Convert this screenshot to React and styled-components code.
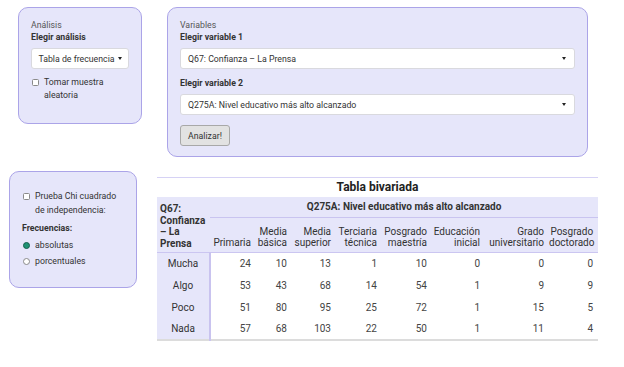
import React from "react";
import styled, { createGlobalStyle } from "styled-components";

const Global = createGlobalStyle`
  html, body { margin: 0; padding: 0; background: #fff; }
  body { font-family: Roboto, "Liberation Sans", sans-serif; color: #333; font-size: 8.75px; }
  * { box-sizing: border-box; }
`;

const Page = styled.div`
  width: 624px;
  padding-top: 7px;
`;

const TopRow = styled.div`
  display: flex;
  align-items: flex-start;
  padding-left: 18px;
  gap: 25px;
`;

const BottomRow = styled.div`
  display: flex;
  align-items: flex-start;
  padding-left: 9px;
  gap: 20px;
  margin-top: 14px;
`;

const Panel = styled.div`
  background: #e6e6fa;
  border: 1px solid #aba4e8;
  border-radius: 10px;
  width: ${(p) => p.$w}px;
  height: ${(p) => p.$h}px;
  padding: ${(p) => p.$pt}px 12px 0 12px;
  font-size: 8.75px;
`;

const Heading = styled.div`
  line-height: 12px;
  color: #555;
`;

const Label = styled.div`
  line-height: 12px;
  font-weight: 700;
  color: #333;
  margin-top: ${(p) => p.$mt || 0}px;
`;

const Select = styled.div`
  margin-top: ${(p) => p.$mt || 5}px;
  height: 21px;
  background: #fff;
  border: 1px solid #d9d9de;
  border-radius: 3px;
  display: flex;
  align-items: center;
  justify-content: ${(p) => (p.$center ? "center" : "space-between")};
  padding: 0 ${(p) => (p.$center ? 2 : 8)}px 0 ${(p) => (p.$center ? 2 : 7)}px;
  color: #333;
  gap: 3px;
  white-space: nowrap;
`;

const Caret = styled.span`
  display: inline-block;
  width: 0;
  height: 0;
  border-left: 2.5px solid transparent;
  border-right: 2.5px solid transparent;
  border-top: 3px solid #222;
`;

const Button = styled.div`
  margin-top: 10px;
  width: 50px;
  height: 21px;
  display: flex;
  align-items: center;
  justify-content: center;
  background: #e2e2e2;
  border: 1px solid #a8a8a8;
  border-radius: 3px;
  color: #333;
`;

const CheckRow = styled.div`
  display: flex;
  align-items: flex-start;
  gap: 5px;
  margin-top: ${(p) => p.$mt || 0}px;
  line-height: ${(p) => p.$lh || 13}px;
  color: #333;
  white-space: nowrap;
`;

const Box = styled.span`
  flex: none;
  width: 7px;
  height: 7px;
  margin-top: ${(p) => p.$off}px;
  margin-left: 1px;
  border: 1px solid #8a8a8a;
  border-radius: 1.5px;
  background: #fff;
`;

const Radio = styled.span`
  flex: none;
  width: 7px;
  height: 7px;
  margin-top: 3.5px;
  margin-left: 1px;
  border-radius: 50%;
  border: 1px solid ${(p) => (p.$on ? "#15604b" : "#8a8a8a")};
  background: ${(p) => (p.$on ? "#1f9274" : "#fff")};
`;

const TableWrap = styled.div`
  margin-top: 6px;
  width: 441px;
  border-top: 1px solid #d6d2f5;
`;

const Title = styled.div`
  height: 19px;
  line-height: 19px;
  text-align: center;
  font-size: 12px;
  font-weight: 700;
  color: #222;
`;

const Table = styled.table`
  width: 441px;
  table-layout: fixed;
  border-collapse: collapse;
  font-size: 10px;
  border-bottom: 2px solid #dcdcdc;
`;

const Col = styled.col`
  width: ${(p) => p.$w}px;
`;

const Thead = styled.thead`
  background: #e6e6fa;
  border-bottom: 1px solid #cbc6f1;
`;

const CornerTh = styled.th`
  text-align: left;
  vertical-align: top;
  font-weight: 700;
  line-height: 11.5px;
  padding: 6px 3px 0 3px;
  color: #333;
`;

const SpanTh = styled.th`
  height: 20px;
  text-align: center;
  font-weight: 700;
  color: #333;
  border-bottom: 1px solid #c9c4f0;
  padding: 0;
`;

const ColTh = styled.th`
  height: 35px;
  text-align: right;
  vertical-align: bottom;
  font-weight: 400;
  line-height: 11.5px;
  padding: 0 5px 3px 0;
  color: #333;
`;

const RowTh = styled.th`
  background: #e6e6fa;
  border-right: 2px solid #c9c3ef;
  font-weight: 400;
  text-align: center;
  height: 22px;
  padding: 0;
  color: #333;
`;

const Td = styled.td`
  text-align: right;
  padding: 0 5px 0 0;
  color: #444;
  height: 22px;
`;

const widths = [53, 46, 36, 44, 46, 50, 53, 64, 49];
const cols = [
  ["Primaria"],
  ["Media", "básica"],
  ["Media", "superior"],
  ["Terciaria", "técnica"],
  ["Posgrado", "maestría"],
  ["Educación", "inicial"],
  ["Grado", "universitario"],
  ["Posgrado", "doctorado"],
];
const rows = [
  ["Mucha", 24, 10, 13, 1, 10, 0, 0, 0],
  ["Algo", 53, 43, 68, 14, 54, 1, 9, 9],
  ["Poco", 51, 80, 95, 25, 72, 1, 15, 5],
  ["Nada", 57, 68, 103, 22, 50, 1, 11, 4],
];

export default function App() {
  return (
    <Page>
      <Global />
      <TopRow>
        <Panel $w={124} $h={117} $pt={11}>
          <Heading>Análisis</Heading>
          <Label>Elegir análisis</Label>
          <Select $center>
            <span>Tabla de frecuencia</span>
            <Caret />
          </Select>
          <CheckRow $mt={7}>
            <Box $off={3} />
            <span>
              Tomar muestra
              <br />
              aleatoria
            </span>
          </CheckRow>
        </Panel>
        <Panel $w={421} $h={150} $pt={11}>
          <Heading>Variables</Heading>
          <Label>Elegir variable 1</Label>
          <Select>
            <span>Q67: Confianza – La Prensa</span>
            <Caret />
          </Select>
          <Label $mt={8}>Elegir variable 2</Label>
          <Select>
            <span>Q275A: Nivel educativo más alto alcanzado</span>
            <Caret />
          </Select>
          <Button>Analizar!</Button>
        </Panel>
      </TopRow>
      <BottomRow>
        <Panel $w={128} $h={117} $pt={17}>
          <CheckRow $lh={14}>
            <Box $off={3.5} />
            <span>
              Prueba Chi cuadrado
              <br />
              de independencia:
            </span>
          </CheckRow>
          <Label $mt={5}>Frecuencias:</Label>
          <CheckRow $lh={14} $mt={4}>
            <Radio $on />
            <span>absolutas</span>
          </CheckRow>
          <CheckRow $lh={14} $mt={2}>
            <Radio />
            <span>porcentuales</span>
          </CheckRow>
        </Panel>
        <TableWrap>
          <Title>Tabla bivariada</Title>
          <Table>
            <colgroup>
              {widths.map((w, i) => (
                <Col key={i} $w={w} />
              ))}
            </colgroup>
            <Thead>
              <tr>
                <CornerTh rowSpan={2}>
                  Q67:
                  <br />
                  Confianza
                  <br />– La
                  <br />
                  Prensa
                </CornerTh>
                <SpanTh colSpan={8}>Q275A: Nivel educativo más alto alcanzado</SpanTh>
              </tr>
              <tr>
                {cols.map((c, i) => (
                  <ColTh key={i}>
                    {c.map((t, j) => (
                      <React.Fragment key={j}>
                        {j > 0 && <br />}
                        {t}
                      </React.Fragment>
                    ))}
                  </ColTh>
                ))}
              </tr>
            </Thead>
            <tbody>
              {rows.map((r) => (
                <tr key={r[0]}>
                  <RowTh>{r[0]}</RowTh>
                  {r.slice(1).map((v, i) => (
                    <Td key={i}>{v}</Td>
                  ))}
                </tr>
              ))}
            </tbody>
          </Table>
        </TableWrap>
      </BottomRow>
    </Page>
  );
}
